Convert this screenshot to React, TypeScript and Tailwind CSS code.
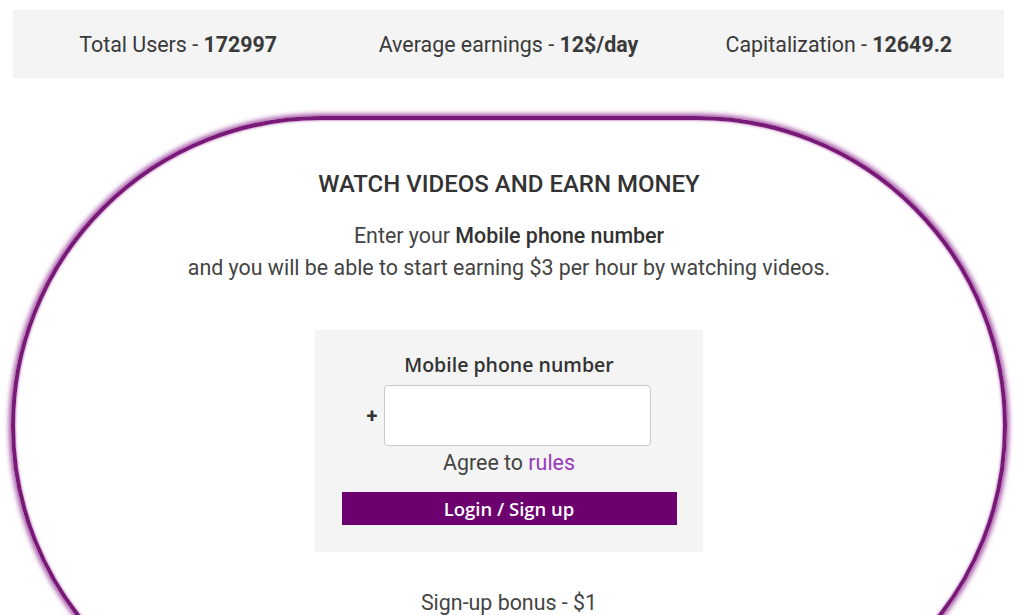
import React from 'react';

const stats = [
    { label: 'Total Users', value: '172997' },
    { label: 'Average earnings', value: '12$/day' },
    { label: 'Capitalization', value: '12649.2' },
];

export default function App() {
    return (
        <div className="w-[1024px] h-[615px] overflow-hidden bg-white font-['Roboto',sans-serif] text-[#444]">
            <div className="ml-[13px] mt-[10px] w-[991px] h-[68px] pt-[3px] bg-[#f4f4f4] grid grid-cols-3 items-center text-[21.4px] text-[#3a3a3a]">
                {stats.map((s) => (
                    <div key={s.label} className="text-center">
                        {s.label} - <span className="font-bold">{s.value}</span>
                    </div>
                ))}
            </div>

            <div className="ml-[11px] mt-[38px] w-[996px] h-[620px] rounded-full border-[4px] border-[#781877] shadow-[0_0_5px_2px_#a04aa0,inset_0_0_3px_#a04aa0] flex flex-col items-center">
                <h1 className="mt-[48px] text-[24px] leading-[32px] font-medium text-[#333]">
                    WATCH VIDEOS AND EARN MONEY
                </h1>
                <p className="mt-[20px] text-[21.4px] leading-[32px] text-center text-[#444]">
                    Enter your <span className="font-medium text-[#333]">Mobile phone number</span>
                    <br />
                    and you will be able to start earning $3 per hour by watching videos.
                </p>

                <div className="mt-[46px] w-[388px] bg-[#f4f4f4] flex flex-col items-center pt-[22px] pb-[27px]">
                    <label className="font-['Open_Sans',sans-serif] font-semibold text-[19.5px] leading-[26px] text-[#333]">
                        Mobile phone number
                    </label>
                    <div className="mt-[7px] flex items-center gap-[7px]">
                        <span className="font-bold text-[20px] text-[#333]">+</span>
                        <input
                            type="text"
                            className="w-[267px] h-[61px] bg-white border-[1.5px] border-[#c8c8c8] rounded-[4px] outline-none px-2"
                        />
                    </div>
                    <div className="mt-[5px] text-[21.4px] leading-[24px] text-[#444]">
                        Agree to <a className="text-[#9a3cb8]">rules</a>
                    </div>
                    <button className="mt-[17px] w-[335px] h-[33px] bg-[#6c006f] text-white font-['Open_Sans',sans-serif] font-semibold text-[18.5px] leading-[33px]">
                        Login / Sign up
                    </button>
                </div>

                <div className="mt-[39px] text-[21.4px] leading-[24px] text-[#444]">
                    Sign-up bonus - $1
                </div>
            </div>
        </div>
    );
}
